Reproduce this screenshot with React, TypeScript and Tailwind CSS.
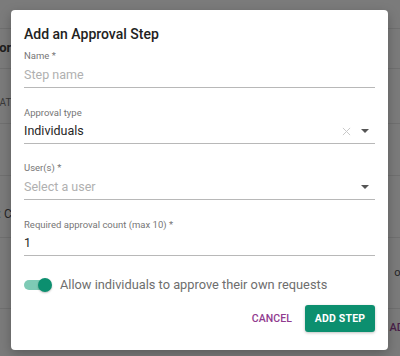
import React from "react";

function Field({
  label,
  value,
  placeholder,
  mt,
  labelGap,
  icons,
}: {
  label: string;
  value?: string;
  placeholder?: string;
  mt: string;
  labelGap: string;
  icons?: "clear" | "arrow";
}) {
  return (
    <div className={mt}>
      <div className="h-[12px] leading-[12px] text-[9.5px] text-[#767676]">{label}</div>
      <div className={`${labelGap} flex items-start border-b border-[#b8b8b8] pb-[3px]`}>
        <div
          className={`flex-1 h-[18px] leading-[18px] text-[12.5px] ${
            value ? "text-[#262626]" : "text-[#b0b0b0]"
          }`}
        >
          {value ?? placeholder}
        </div>
        {icons && (
          <div className="flex h-[18px] items-center gap-[10px] pr-[6px]">
            {icons === "clear" && (
              <svg width="9" height="9" viewBox="0 0 10 10">
                <path d="M1 1 L9 9 M9 1 L1 9" stroke="#c8c8c8" strokeWidth="1.1" fill="none" />
              </svg>
            )}
            <svg width="8" height="4" viewBox="0 0 8 4">
              <path d="M0 0 L8 0 L4 4 Z" fill="#555" />
            </svg>
          </div>
        )}
      </div>
    </div>
  );
}

export default function App() {
  return (
    <div
      className="relative w-[400px] h-[356px] overflow-hidden bg-[#7b7b7b]"
      style={{ fontFamily: "Roboto, 'Liberation Sans', sans-serif" }}
    >
      {/* background page (under overlay) */}
      <div className="flex flex-col">
        <div className="h-[28px]" />
        <div className="h-[40px] border-t border-[#707070] flex items-center">
          <span className="ml-[-12px] mt-[-2px] text-[13px] font-bold text-[#1e1e1e]">Workflow</span>
        </div>
        <div className="h-[55px] border-t border-[#707070] flex items-center justify-between">
          <span className="ml-[-7px] mt-[12px] text-[10px] text-[#3a3a3a]">CAT</span>
        </div>
        <div className="h-[52px] border-t border-[#707070]" />
        <div className="h-[62px] border-t border-[#707070] flex items-center">
          <span className="ml-[-2px] mt-[14px] text-[12px] text-[#262626]">: C</span>
        </div>
        <div className="h-[71px] border-t border-[#707070] flex items-center justify-end">
          <span className="mr-[-6px] text-[11px] text-[#262626] mt-[0px]">o :</span>
        </div>
        <div className="h-[48px] border-t border-[#707070] flex items-center justify-end">
          <span className="mr-[-4px] text-[11px] font-medium text-[#4a1f4a] mt-[-8px]">AD</span>
        </div>
      </div>

      {/* dialog */}
      <div className="absolute left-[11px] top-[10px] w-[377px] h-[340px] rounded-[4px] bg-white px-[13px] pt-[14px] shadow-[0_4px_12px_rgba(0,0,0,0.25)]">
        <div className="h-[20px] leading-[20px] text-[14px] font-medium text-[#222]">
          Add an Approval Step
        </div>
        <Field label="Name *" placeholder="Step name" mt="mt-[6px]" labelGap="mt-[4px]" />
        <Field
          label="Approval type"
          value="Individuals"
          mt="mt-[19px]"
          labelGap="mt-[3px]"
          icons="clear"
        />
        <Field
          label="User(s) *"
          placeholder="Select a user"
          mt="mt-[18px]"
          labelGap="mt-[4px]"
          icons="arrow"
        />
        <Field
          label="Required approval count (max 10) *"
          value="1"
          mt="mt-[19px]"
          labelGap="mt-[3px]"
        />

        <div className="mt-[20px] flex items-center h-[18px]">
          <div className="relative w-[28px] h-[16px] flex items-center">
            <div className="w-[26px] h-[10px] rounded-full bg-[#7ecab5]" />
            <div className="absolute left-[14px] top-[1px] w-[14px] h-[14px] rounded-full bg-[#0c8f6f] shadow-[0_1px_2px_rgba(0,0,0,0.25)]" />
          </div>
          <span className="ml-[8px] text-[12.8px] text-[#6e6e6e]">
            Allow individuals to approve their own requests
          </span>
        </div>

        <div className="mt-[11px] flex items-center justify-end">
          <button className="mr-[13px] text-[10.5px] font-medium tracking-[0.1px] text-[#913b8f]">
            CANCEL
          </button>
          <button className="h-[27px] w-[70px] rounded-[3px] bg-[#0c8f6f] text-[10.5px] font-bold tracking-[0.2px] text-white shadow-[0_1px_3px_rgba(0,0,0,0.25)]">
            ADD STEP
          </button>
        </div>
      </div>
    </div>
  );
}
